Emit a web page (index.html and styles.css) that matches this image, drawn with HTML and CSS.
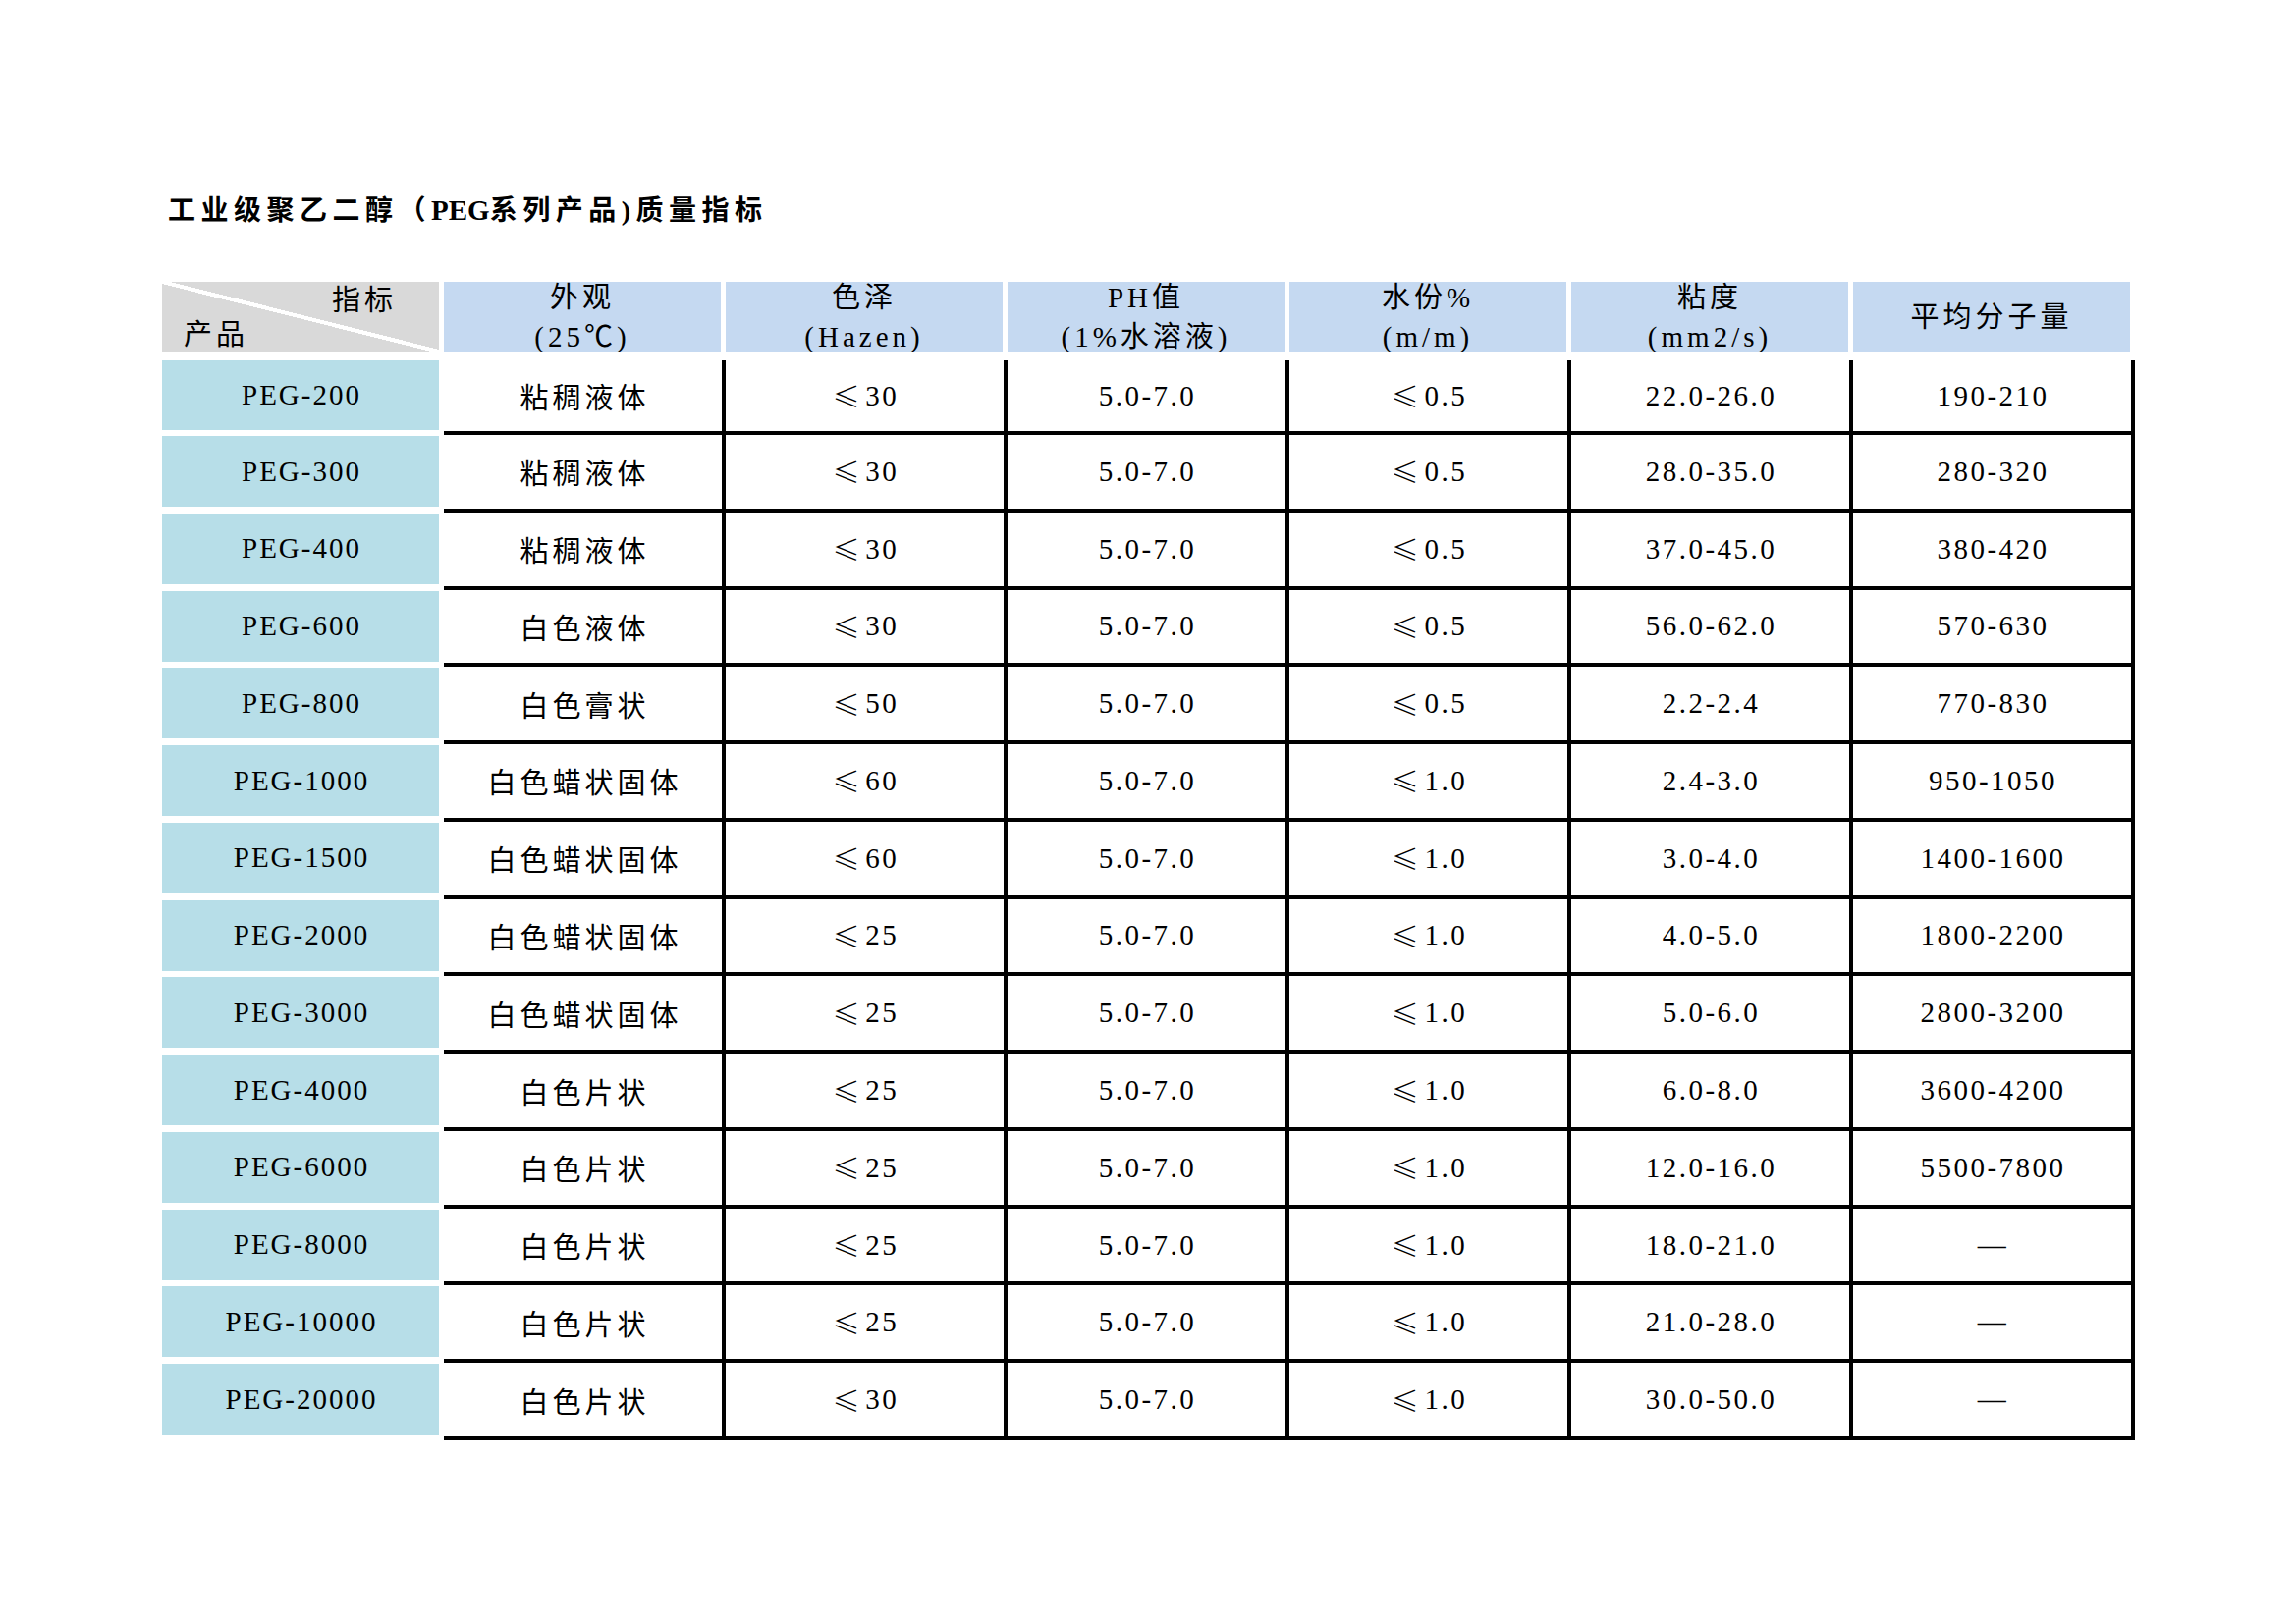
FILE: index.html
```html
<!DOCTYPE html>
<html lang="zh-CN">
<head>
<meta charset="utf-8">
<title>工业级聚乙二醇质量指标</title>
<link rel="stylesheet" href="styles.css">
</head>
<body>
<div class="page">
  <h1 class="title">工业级聚乙二醇（<span class="lat">PEG</span>系列产品)质量指标</h1>
  <div class="table">
    <div class="thead">
      <div class="hcell diag">
        <div class="d-top">指标</div>
        <div class="d-bot">产品</div>
      </div>
      <div class="hcell blue"><div>外观<br>(25℃)</div></div>
      <div class="hcell blue"><div>色泽<br>(Hazen)</div></div>
      <div class="hcell blue"><div>PH值<br>(1%水溶液)</div></div>
      <div class="hcell blue"><div>水份%<br>(m/m)</div></div>
      <div class="hcell blue"><div>粘度<br>(mm2/s)</div></div>
      <div class="hcell blue"><div>平均分子量</div></div>
    </div>
    <div class="tbody">
      <div class="row"><div class="prod">PEG-200</div><div class="cell cn">粘稠液体</div><div class="cell num"><span class="le">≤</span>30</div><div class="cell num">5.0-7.0</div><div class="cell num"><span class="le">≤</span>0.5</div><div class="cell num">22.0-26.0</div><div class="cell num">190-210</div></div>
      <div class="row"><div class="prod">PEG-300</div><div class="cell cn">粘稠液体</div><div class="cell num"><span class="le">≤</span>30</div><div class="cell num">5.0-7.0</div><div class="cell num"><span class="le">≤</span>0.5</div><div class="cell num">28.0-35.0</div><div class="cell num">280-320</div></div>
      <div class="row"><div class="prod">PEG-400</div><div class="cell cn">粘稠液体</div><div class="cell num"><span class="le">≤</span>30</div><div class="cell num">5.0-7.0</div><div class="cell num"><span class="le">≤</span>0.5</div><div class="cell num">37.0-45.0</div><div class="cell num">380-420</div></div>
      <div class="row"><div class="prod">PEG-600</div><div class="cell cn">白色液体</div><div class="cell num"><span class="le">≤</span>30</div><div class="cell num">5.0-7.0</div><div class="cell num"><span class="le">≤</span>0.5</div><div class="cell num">56.0-62.0</div><div class="cell num">570-630</div></div>
      <div class="row"><div class="prod">PEG-800</div><div class="cell cn">白色膏状</div><div class="cell num"><span class="le">≤</span>50</div><div class="cell num">5.0-7.0</div><div class="cell num"><span class="le">≤</span>0.5</div><div class="cell num">2.2-2.4</div><div class="cell num">770-830</div></div>
      <div class="row"><div class="prod">PEG-1000</div><div class="cell cn">白色蜡状固体</div><div class="cell num"><span class="le">≤</span>60</div><div class="cell num">5.0-7.0</div><div class="cell num"><span class="le">≤</span>1.0</div><div class="cell num">2.4-3.0</div><div class="cell num">950-1050</div></div>
      <div class="row"><div class="prod">PEG-1500</div><div class="cell cn">白色蜡状固体</div><div class="cell num"><span class="le">≤</span>60</div><div class="cell num">5.0-7.0</div><div class="cell num"><span class="le">≤</span>1.0</div><div class="cell num">3.0-4.0</div><div class="cell num">1400-1600</div></div>
      <div class="row"><div class="prod">PEG-2000</div><div class="cell cn">白色蜡状固体</div><div class="cell num"><span class="le">≤</span>25</div><div class="cell num">5.0-7.0</div><div class="cell num"><span class="le">≤</span>1.0</div><div class="cell num">4.0-5.0</div><div class="cell num">1800-2200</div></div>
      <div class="row"><div class="prod">PEG-3000</div><div class="cell cn">白色蜡状固体</div><div class="cell num"><span class="le">≤</span>25</div><div class="cell num">5.0-7.0</div><div class="cell num"><span class="le">≤</span>1.0</div><div class="cell num">5.0-6.0</div><div class="cell num">2800-3200</div></div>
      <div class="row"><div class="prod">PEG-4000</div><div class="cell cn">白色片状</div><div class="cell num"><span class="le">≤</span>25</div><div class="cell num">5.0-7.0</div><div class="cell num"><span class="le">≤</span>1.0</div><div class="cell num">6.0-8.0</div><div class="cell num">3600-4200</div></div>
      <div class="row"><div class="prod">PEG-6000</div><div class="cell cn">白色片状</div><div class="cell num"><span class="le">≤</span>25</div><div class="cell num">5.0-7.0</div><div class="cell num"><span class="le">≤</span>1.0</div><div class="cell num">12.0-16.0</div><div class="cell num">5500-7800</div></div>
      <div class="row"><div class="prod">PEG-8000</div><div class="cell cn">白色片状</div><div class="cell num"><span class="le">≤</span>25</div><div class="cell num">5.0-7.0</div><div class="cell num"><span class="le">≤</span>1.0</div><div class="cell num">18.0-21.0</div><div class="cell num">—</div></div>
      <div class="row"><div class="prod">PEG-10000</div><div class="cell cn">白色片状</div><div class="cell num"><span class="le">≤</span>25</div><div class="cell num">5.0-7.0</div><div class="cell num"><span class="le">≤</span>1.0</div><div class="cell num">21.0-28.0</div><div class="cell num">—</div></div>
      <div class="row"><div class="prod">PEG-20000</div><div class="cell cn">白色片状</div><div class="cell num"><span class="le">≤</span>30</div><div class="cell num">5.0-7.0</div><div class="cell num"><span class="le">≤</span>1.0</div><div class="cell num">30.0-50.0</div><div class="cell num">—</div></div>
    </div>
  </div>
</div>
</body>
</html>
```
FILE: styles.css
```css
html, body {
  margin: 0;
  padding: 0;
  background: #ffffff;
}

.page {
  padding: 192px 0 0 165px;
  color: #000;
}

.title {
  margin: 0 0 0 6px;
  height: 44px;
  line-height: 44px;
  font-family: "Liberation Serif", "Noto Sans CJK SC", serif;
  font-size: 28px;
  font-weight: 700;
  letter-spacing: 5.5px;
  white-space: nowrap;
}

.title .lat {
  letter-spacing: 0;
  font-size: 29px;
}

.table {
  margin-top: 51px;
}

.thead {
  display: flex;
  gap: 5px;
  height: 71px;
}

.hcell {
  width: 282px;
  height: 71px;
  overflow: hidden;
  font-family: "Liberation Serif", "Noto Sans CJK SC", serif;
  font-size: 29px;
  letter-spacing: 4px;
  line-height: 40px;
}

.blue {
  background: #c5d9f1;
  display: flex;
  align-items: center;
  justify-content: center;
  text-align: center;
}

.diag {
  background: linear-gradient(to top right,
    #d9d9d9 calc(50% - 2px),
    #ffffff calc(50% - 2px),
    #ffffff calc(50% + 2px),
    #d9d9d9 calc(50% + 2px));
}

.d-top {
  margin-top: -1px;
  text-align: right;
  padding-right: 43px;
}

.d-bot {
  text-align: left;
  padding-left: 22px;
  margin-top: -3px;
  line-height: 36px;
}

.tbody {
  margin-top: 9px;
  display: grid;
  grid-template-rows: 76px repeat(13, 78.77px);
}

.row {
  display: flex;
}

.prod {
  width: 282px;
  height: 72px;
  margin: 1px 5px 0 0;
  background: #b7dee8;
  display: flex;
  align-items: center;
  justify-content: center;
  font-family: "Liberation Serif", "Noto Sans CJK SC", serif;
  font-size: 29px;
  letter-spacing: 2px;
  padding-left: 2px;
  box-sizing: border-box;
}

.row:first-child .prod {
  margin-top: 0;
  height: 71px;
}

.cell {
  width: 287px;
  box-sizing: border-box;
  border-right: 4px solid #000;
  border-bottom: 4px solid #000;
  display: flex;
  align-items: center;
  justify-content: center;
  white-space: nowrap;
}

.cn {
  font-family: "Liberation Serif", "Noto Sans CJK SC", serif;
  font-size: 29px;
  letter-spacing: 4px;
  padding-left: 4px;
}

.num {
  font-family: "Liberation Serif", "Noto Sans CJK SC", serif;
  font-size: 29px;
  letter-spacing: 2.5px;
  padding-left: 2px;
}

.le {
  font-family: "Noto Sans CJK SC", sans-serif;
  font-size: 28px;
  font-weight: 300;
  margin-right: 3px;
}
```
